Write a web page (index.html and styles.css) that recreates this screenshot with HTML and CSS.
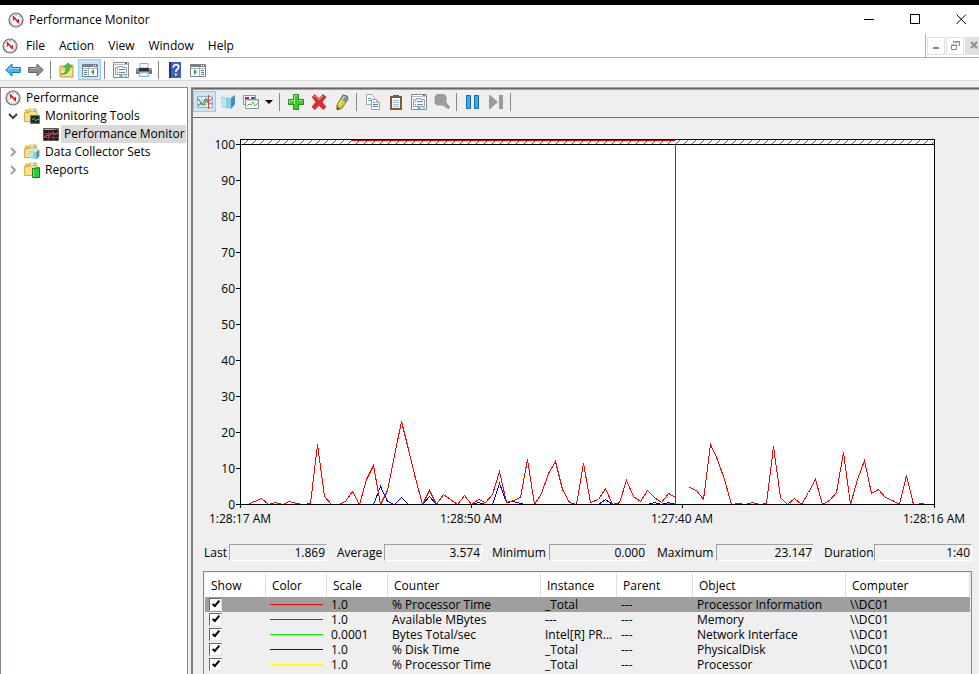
FILE: index.html
```html
<!DOCTYPE html>
<html lang="en">
<head>
  <meta charset="UTF-8">
  <meta name="viewport" content="width=device-width, initial-scale=1.0">
  <title>Performance Monitor</title>
  <link rel="stylesheet" href="styles.css">
</head>
<body>
  <!-- Shared icons -->
  <svg class="sprite" aria-hidden="true">
    <symbol id="i-logo" viewBox="0 0 16 16">
      <circle cx="8" cy="8" r="7" fill="#e4e4e4" stroke="#6e6e6e" stroke-width="1.2"/>
      <circle cx="8" cy="8" r="5.700" fill="#fff" stroke="#b0b0b0" stroke-width=".6"/>
      <path d="M5.500 8.500V5l5 5.500V7" fill="none" stroke="#e3101c" stroke-width="1.100"/>
      <path d="M5 4.500l5.500 6" fill="none" stroke="#e3101c" stroke-width="1.600"/>
      <path d="M3.500 9.500l1-1M11.500 5l1-1M8 3v1" stroke="#777" stroke-width=".8"/>
    </symbol>
    <symbol id="i-folder" viewBox="0 0 16 16">
      <path d="M1 1.500h4l1-1h6l1 1v12H1z" fill="#e8bf55"/>
      <path d="M7 1.500h5v2H7z" fill="#fff"/>
      <path d="M9 1.500h3v1H9z" fill="#49a5dd"/>
      <path d="M.5 4.500h5l1-1h6.500v10H.5z" fill="#f9df8c" stroke="#dcae43"/>
    </symbol>
    <symbol id="i-props" viewBox="0 0 16 16">
      <path d="M.5.500h15v15H.5z" fill="#fff" stroke="#8a8a8a"/>
      <path d="M1 2.500h14" stroke="#b5bcc5"/>
      <path d="M12 1.500h2" stroke="#555"/>
      <path d="M2.500 5.500h3v-1h4v1h4v7h-11z" fill="#f3f6fa" stroke="#95a0ad"/>
      <path d="M4 7.500h1M4 10.500h1" stroke="#28a8c8"/>
      <path d="M6 7.500h6M6 10.500h6" stroke="#7d8793"/>
      <path d="M6.500 14h3" stroke="#36c5ef" stroke-width="2"/>
      <path d="M11 14h3" stroke="#b8d8e8" stroke-width="2"/>
    </symbol>
    <symbol id="i-cube" viewBox="0 0 16 16">
      <path d="M1 3l5-2h9v9l-4 5-9-2z" fill="#8fcbe2"/>
      <path d="M1 3l5-2h9l-4 3z" fill="#dcf1f8"/>
      <path d="M11 4l4-3v9l-4 5z" fill="#3f91b8"/>
      <path d="M2 4l4 .5V13l-4-1z" fill="#bfe5f2"/>
    </symbol>
  </svg>

  <header class="title-bar">
    <svg class="icon"><use href="#i-logo"/></svg>
    <h1>Performance Monitor</h1>
    <div class="window-controls">
      <button aria-label="Minimize"><svg width="11" height="11"><path d="M0 5.500h10"/></svg></button>
      <button aria-label="Maximize"><svg width="11" height="11"><path d="M.5.500h9v9h-9z"/></svg></button>
      <button aria-label="Close"><svg class="smooth" width="11" height="11"><path d="M.5.500l9.500 9.500M10 .5L.5 10"/></svg></button>
    </div>
  </header>

  <nav class="menu-bar">
    <svg class="icon"><use href="#i-logo"/></svg>
    <button>File</button>
    <button>Action</button>
    <button>View</button>
    <button>Window</button>
    <button>Help</button>
    <div class="child-controls">
      <button aria-label="Minimize child"><svg width="11" height="11"><path d="M2 8h6" stroke="#7b8b9b" stroke-width="2"/></svg></button>
      <button aria-label="Restore child"><svg width="11" height="11" fill="none" stroke="#7b8b9b"><path d="M3.500 3V1.500h6v4H8M3 2h7M1.500 5.500h5v4h-5zM1 5h6"/></svg></button>
      <button class="disabled" aria-label="Close child"><svg width="11" height="11"><path d="M2 2l6 6M8 2L2 8" stroke="#8493a1" stroke-width="2"/></svg></button>
    </div>
  </nav>

  <div class="toolbar main-toolbar">
    <button aria-label="Back"><svg class="icon" viewBox="0 0 16 16"><path d="M.7 8L7 2v3.500h8.300v5H7V14z" fill="#42b4f0" stroke="#1674b8"/><path d="M3 8l3-3v1.500h8" fill="none" stroke="#9bddfb"/></svg></button>
    <button aria-label="Forward"><svg class="icon" viewBox="0 0 16 16"><path d="M15.300 8L9 2v3.500H.7v5H9V14z" fill="#8c8c8c" stroke="#666"/><path d="M2 6.500h8V5" fill="none" stroke="#b5b5b5"/></svg></button>
    <span class="separator"></span>
    <button aria-label="Up one level"><svg class="icon" viewBox="0 0 16 16"><path d="M1 4h4l1 1h5V3h3v12H1z" fill="#f2d27c" stroke="#c79a3e"/><path d="M2 8h11v6H2z" fill="#f8df9c"/><path d="M2 12c4 0 5-2 5-7H4.500L9 1l4 4h-2.500c0 5-3 8-8.500 7z" fill="#4cc13c" stroke="#319326" stroke-width=".6"/></svg></button>
    <button class="active" aria-label="Show or hide console tree"><svg class="icon" viewBox="0 0 16 16"><path d="M.5 2.500h15v12H.5z" fill="#fff" stroke="#79828c"/><path d="M0 4h16" stroke="#79828c" stroke-width="2"/><path d="M11 3.500h1M13 3.500h1" stroke="#fff"/><path d="M6.500 5v9M1 6.500h14" stroke="#aab1b8"/><path d="M2 8.500h3M2 10.500h3M2 12.500h3" stroke="#4c87ad"/><path d="M12 7v6l-3-3z" fill="#32a632"/></svg></button>
    <span class="separator"></span>
    <button aria-label="Properties"><svg class="icon"><use href="#i-props"/></svg></button>
    <button aria-label="Print"><svg class="icon" viewBox="0 0 16 16"><path d="M4 1.500h8V6H4z" fill="#f9f9f9" stroke="#aaa"/><path d="M0 6h16v6H0z" fill="#74787c"/><path d="M0 6h16v2H0z" fill="#9ca0a4"/><path d="M3 6h10v3H3z" fill="#303234"/><path d="M3.500 10.500h9v4h-9z" fill="#e7f5fc" stroke="#84b9d4"/><path d="M1 9.500h1" stroke="#69e06a"/></svg></button>
    <span class="separator"></span>
    <button aria-label="Help"><svg class="icon" viewBox="0 0 16 16"><path d="M2 0h12v16H2z" fill="#3d5fc0"/><path d="M2 0h2v16H2z" fill="#18367e"/><path d="M6.300 5.500c0-4 5.300-3.500 5.300-.5 0 2.300-2.800 2.200-2.800 5M8.800 11.500v2" fill="none" stroke="#fff" stroke-width="1.800"/></svg></button>
    <button aria-label="Show or hide action pane"><svg class="icon" viewBox="0 0 16 16"><path d="M.5 2.500h15v12H.5z" fill="#fff" stroke="#79828c"/><path d="M0 4h16" stroke="#79828c" stroke-width="2"/><path d="M11 3.500h1M13 3.500h1" stroke="#fff"/><path d="M9.500 5v9M1 6.500h14" stroke="#aab1b8"/><path d="M11 8.500h3M11 10.500h3M11 12.500h3" stroke="#4c87ad"/><path d="M4 7v6l3-3z" fill="#32a632"/></svg></button>
  </div>

  <main class="workspace">
    <aside class="tree">
      <div class="node"><svg class="icon"><use href="#i-logo"/></svg><span>Performance</span></div>
      <ul>
        <li>
          <div class="node">
            <svg class="chevron open" viewBox="0 0 10 10"><path d="M1 3l4 4 4-4"/></svg>
            <svg class="icon"><use href="#i-folder"/><path d="M6.500 7.500h9v8h-9z" fill="#1f2b25" stroke="#707870"/><path d="M8 12l2-2 2 3 1-1.500h2" fill="none" stroke="#39d149"/></svg>
            <span>Monitoring Tools</span>
          </div>
          <ul>
            <li>
              <div class="node selected">
                <svg class="icon" viewBox="0 0 16 16"><path d="M.5 2.500h15v12H.5z" fill="#211b1d" stroke="#555"/><path d="M1 3.500h14" stroke="#aaa"/><path d="M11 3.500h1M13 3.500h1" stroke="#333"/><path d="M1 7.500h14M1 11.500h14M5.500 5v9M10.500 5v9" stroke="#5a4a4d"/><path d="M1 11l3-2 2 1 3-3 3 1.500L15 7" fill="none" stroke="#e1343d" stroke-width="1.500"/></svg>
                <span>Performance Monitor</span>
              </div>
            </li>
          </ul>
        </li>
        <li>
          <div class="node">
            <svg class="chevron" viewBox="0 0 10 10"><path d="M3 1l4 4-4 4"/></svg>
            <svg class="icon"><use href="#i-folder"/><use href="#i-cube" x="5" y="5" width="11" height="11"/></svg>
            <span>Data Collector Sets</span>
          </div>
        </li>
        <li>
          <div class="node">
            <svg class="chevron" viewBox="0 0 10 10"><path d="M3 1l4 4-4 4"/></svg>
            <svg class="icon"><use href="#i-folder"/><path d="M8.500 6.500l7-1v10h-7z" fill="#27cf32" stroke="#147a1c"/><path d="M9.500 7v8" stroke="#8cf08e"/></svg>
            <span>Reports</span>
          </div>
        </li>
      </ul>
    </aside>

    <section class="monitor">
      <div class="toolbar graph-toolbar">
        <button class="active" aria-label="View current activity"><svg class="icon" viewBox="0 0 16 16"><path d="M.5 2.500h15v11H.5z" fill="#e8f2f8" stroke="#9aaebd"/><path d="M1 6.500h14M1 10.500h14M4.500 3v10M8.500 3v10" stroke="#c5d3dd"/><path d="M1 4l4 7 3-6 3 4 4-5" fill="none" stroke="#4573a5"/><path d="M1 12l3-3 3 2 3-6 2 5 3-1" fill="none" stroke="#45b638" stroke-width="1.200"/><path d="M11.500 1v14" stroke="#d3464a"/></svg></button>
        <button aria-label="View log data"><svg class="icon"><use href="#i-cube"/></svg></button>
        <button aria-label="Change graph type"><svg class="icon" viewBox="0 0 16 16"><path d="M.5 1.500h12v9H.5z" fill="#fff" stroke="#8794af"/><path d="M2 3h4v3H2z" fill="#b3264e"/><path d="M8 3h4v2H8z" fill="#386cb5"/><path d="M2.500 5.500h13v9h-13z" fill="#fff" stroke="#8794af"/><path d="M3 6.500h12" stroke="#c3cde0"/><path d="M4 12l2-2 2 1 2-3 2 4 3-3" fill="none" stroke="#5fae38"/></svg></button>
        <button class="drop" aria-label="Graph types"><svg width="8" height="4"><path d="M0 0h8L4 4z"/></svg></button>
        <span class="separator"></span>
        <button aria-label="Add"><svg class="icon" viewBox="0 0 16 16"><path d="M5.500.500h5v5h5v5h-5v5h-5v-5h-5v-5h5z" fill="#3fcb25" stroke="#278718"/><path d="M6.500 10V1.500H9M1.500 9V6.500h5M11 6.500h3.500" fill="none" stroke="#a3ef8d"/></svg></button>
        <button aria-label="Delete"><svg class="icon" viewBox="0 0 16 16"><path d="M1 3l3-2.500L8 5l4-4.500L15 3l-4 5 4 5-3 2.500L8 11l-4 4.500L1 13l4-5z" fill="#df2e2e" stroke="#b51d1d" stroke-width=".7"/><path d="M2 3l2-1.500L8 6l4-4" fill="none" stroke="#ff9a91"/></svg></button>
        <button aria-label="Highlight"><svg class="icon" viewBox="0 0 16 16"><path d="M9 1l4 1 1 3-6 9-5 2V11z" fill="#e4cb2e" stroke="#75702f"/><path d="M9 1l4 1 1 3-2 3-5-3z" fill="#7c9daf" stroke="#5a6f7a" stroke-width=".6"/><path d="M10.500 2L5 11" stroke="#fff4a2"/><path d="M3 12v4l3-1z" fill="#555029"/></svg></button>
        <span class="separator"></span>
        <button aria-label="Copy properties"><svg class="icon" viewBox="0 0 16 16"><path d="M1.500.500h5l3 3v7h-8z" fill="#fff" stroke="#a4a4a4"/><path d="M3 4.500h3M3 6.500h4" stroke="#6a9bcd"/><path d="M6.500 5.500h5l3 3v7h-8z" fill="#fff" stroke="#a4a4a4"/><path d="M11.500 5.500v3h3" fill="none" stroke="#a4a4a4"/><path d="M8 8.500h2M8 10.500h5M8 12.500h5" stroke="#4585c4"/></svg></button>
        <button aria-label="Paste counter list"><svg class="icon" viewBox="0 0 16 16"><path d="M2 2h12v14H2z" fill="#8b572b"/><path d="M4 4h8v10H4z" fill="#fff"/><path d="M5 1h6v3H5z" fill="#5d666e"/><path d="M5 6.500h6M5 8.500h6M5 10.500h6M5 12.500h6" stroke="#9dbfd4"/></svg></button>
        <button aria-label="Properties"><svg class="icon"><use href="#i-props"/></svg></button>
        <button aria-label="Zoom"><svg class="icon" viewBox="0 0 16 16"><path d="M3 0h7l2.500 2.500v6L16 13l-1.500 2.500L9 11.500H3L.5 9V2.500z" fill="#9b9b9b"/></svg></button>
        <span class="separator"></span>
        <button aria-label="Freeze display"><svg class="icon" viewBox="0 0 16 16"><path d="M1.500 1.500h4v13h-4zM9.500 1.500h4v13h-4z" fill="#31b0ed" stroke="#1269b0"/></svg></button>
        <button aria-label="Update data"><svg class="icon" viewBox="0 0 16 16"><path d="M1 1h1l8 7-8 7H1zM11 1h4v14h-4z" fill="#9b9b9b"/></svg></button>
        <span class="separator"></span>
      </div>

      <div class="chart">
        <div class="y-axis">
          <span>100</span><span>90</span><span>80</span><span>70</span><span>60</span><span>50</span>
          <span>40</span><span>30</span><span>20</span><span>10</span><span>0</span>
        </div>
        <div class="plot">
          <svg class="clip-band" width="100%" height="5">
            <defs>
              <pattern id="hatch" width="8" height="5" patternUnits="userSpaceOnUse"><path d="M2 5l5-5" stroke="#555"/></pattern>
            </defs>
            <rect width="100%" height="5" fill="url(#hatch)"/>
          </svg>
          <svg class="clip-line" viewBox="0 0 694 2" preserveAspectRatio="none"><path d="M111 1h324" stroke="#e80000" stroke-width="2"/></svg>
          <svg class="series" viewBox="0.5 0.5 693 359" preserveAspectRatio="none">
            <path stroke="#00ff00" d="M421 359h14"/>
            <polyline stroke="#ffff00" points="266,358 273,353 280,353 287,316"/>
            <g stroke="#0000ff">
              <polyline points="133,360 140,342 147,357 154,360 161,353 168,360"/>
              <polyline points="182,360 189,352 196,360"/>
              <polyline points="231,360 238,358 245,360 252,360 259,339 266,358 273,357 280,359 284,360"/>
              <polyline points="358,360 365,355 372,360 379,359"/>
              <polyline points="407,360 414,358 421,360 428,358 435,360"/>
            </g>
            <g stroke="#ff0000">
              <polyline points="7,360 14,357 21,354 28,360 35,358 42,360 49,357 56,359 63,360 70,359 77,300 84,352 91,360 98,360 105,357 112,347 119,360 126,335 133,321 140,360 147,346 154,311 161,277 168,305 175,334 182,360 189,346 196,360 203,350 210,355 217,360 224,351 231,360 238,355 245,358 252,350 259,327 266,358 273,356 280,353 287,315 294,360 301,349 308,329 315,317 322,345 329,358 336,360 343,319 350,358 358,355 365,344 372,360 379,358 386,336 393,352 400,357 407,346 414,353 421,358 428,349 435,353"/>
              <polyline points="449,343 456,346 463,355 470,300 477,315 484,335 491,360 498,359 505,360 512,358 519,360 526,359 533,302 540,353 547,360 554,354 561,360 568,348 575,335 582,360 589,356 596,348 603,308 610,360 617,335 624,316 631,349 638,345 645,353 652,356 659,360 666,331 673,360 684,359"/>
              <path d="M435 0v360"/>
            </g>
          </svg>
        </div>
        <div class="x-axis">
          <span>1:28:17 AM</span><span>1:28:50 AM</span><span>1:27:40 AM</span><span>1:28:16 AM</span>
        </div>
      </div>

      <div class="stats">
        <label for="last">Last</label><input id="last" value="1.869" readonly>
        <label for="average">Average</label><input id="average" value="3.574" readonly>
        <label for="minimum">Minimum</label><input id="minimum" value="0.000" readonly>
        <label for="maximum">Maximum</label><input id="maximum" value="23.147" readonly>
        <label for="duration">Duration</label><input id="duration" value="1:40" readonly>
      </div>

      <div class="legend">
        <table>
          <colgroup>
            <col class="w-small"><col class="w-small"><col class="w-small"><col class="w-large">
            <col class="w-medium"><col class="w-medium"><col class="w-large"><col>
          </colgroup>
          <thead>
            <tr><th>Show</th><th>Color</th><th>Scale</th><th>Counter</th><th>Instance</th><th>Parent</th><th>Object</th><th>Computer</th></tr>
          </thead>
          <tbody>
            <tr class="selected"><td><input type="checkbox" aria-label="Show processor information" checked></td><td><i class="line red"></i></td><td>1.0</td><td>% Processor Time</td><td>_Total</td><td>---</td><td>Processor Information</td><td>\\DC01</td></tr>
            <tr><td><input type="checkbox" aria-label="Show memory" checked></td><td><i class="line red"></i></td><td>1.0</td><td>Available MBytes</td><td>---</td><td>---</td><td>Memory</td><td>\\DC01</td></tr>
            <tr><td><input type="checkbox" aria-label="Show network interface" checked></td><td><i class="line green"></i></td><td>0.0001</td><td>Bytes Total/sec</td><td>Intel[R] PR...</td><td>---</td><td>Network Interface</td><td>\\DC01</td></tr>
            <tr><td><input type="checkbox" aria-label="Show physical disk" checked></td><td><i class="line blue"></i></td><td>1.0</td><td>% Disk Time</td><td>_Total</td><td>---</td><td>PhysicalDisk</td><td>\\DC01</td></tr>
            <tr><td><input type="checkbox" aria-label="Show processor" checked></td><td><i class="line yellow"></i></td><td>1.0</td><td>% Processor Time</td><td>_Total</td><td>---</td><td>Processor</td><td>\\DC01</td></tr>
          </tbody>
        </table>
      </div>
    </section>
  </main>
</body>
</html>
```
FILE: styles.css
```css
*, *::before, *::after {
  box-sizing: border-box;
}

:root {
  --face: #efefef;
  --border: #828790;
  --active-bg: #cce4f7;
  --active-border: #99cdf5;
}

body {
  font-family: "Segoe UI", "Open Sans", sans-serif;
  font-size: 12px;
  line-height: 15px;
  color: #000;
  background: var(--face);
  margin: 0;
  height: 100vh;
  overflow: hidden;
  display: flex;
  flex-direction: column;
}

svg {
  display: block;
  flex: none;
}

.sprite {
  position: absolute;
  width: 0;
  height: 0;
}

.icon {
  width: 16px;
  height: 16px;
}

button {
  font: inherit;
  color: inherit;
  background: transparent;
  border: 0;
  padding: 0;
}

/* Title bar */
.title-bar {
  display: flex;
  align-items: center;
  height: 34px;
  flex: none;
  padding-left: 8px;
  border-top: 5px solid #000;
  background: #fff;
}

.title-bar h1 {
  font-size: 12px;
  font-weight: 400;
  margin: 0 0 0 5px;
}

.window-controls {
  display: flex;
  margin-left: auto;
  margin-right: -5px;
}

.window-controls button {
  width: 46px;
  height: 29px;
  display: grid;
  place-items: center;
}

.window-controls path {
  fill: none;
  stroke: #000;
  shape-rendering: crispEdges;
}

.window-controls .smooth path {
  shape-rendering: auto;
}

/* Menu bar */
.menu-bar {
  display: flex;
  align-items: center;
  height: 24px;
  flex: none;
  padding-left: 2px;
  background: #fff;
  border-bottom: 1px solid #acafb5;
}

.menu-bar > button {
  padding: 0 7px;
}

.menu-bar .icon {
  margin-right: 1px;
}

.child-controls {
  display: flex;
  align-items: center;
  gap: 1px;
  align-self: stretch;
  margin-left: auto;
  margin-right: -4px;
  padding-left: 1px;
  border-left: 1px solid #acafb5;
}

.child-controls button {
  width: 18px;
  height: 18px;
  display: grid;
  place-items: center;
  border: 1px solid #e0e0e0;
}

.child-controls .disabled {
  background: #e0e0e0;
}

/* Toolbars */
.toolbar {
  display: flex;
  align-items: center;
  flex: none;
}

.toolbar button {
  width: 23px;
  height: 21px;
  display: grid;
  place-items: center;
}

.toolbar .active {
  background: var(--active-bg);
  border: 1px solid var(--active-border);
}

.toolbar .drop {
  width: 14px;
}

.separator {
  width: 8px;
  height: 18px;
  background: linear-gradient(#85878a, #85878a) 3px 0 / 1px 100% no-repeat;
}

.main-toolbar {
  height: 23px;
  padding: 1px 0 0 1px;
  background: #fff;
  border-bottom: 1px solid #dadada;
}

.graph-toolbar {
  height: 30px;
  padding-bottom: 2px;
  border-bottom: 1px solid #6b6b6b;
}

/* Tree and main pane */
.workspace {
  display: flex;
  gap: 3px;
  flex: 1;
  min-height: 0;
  padding-top: 6px;
}

.tree {
  width: 188px;
  flex: none;
  overflow: hidden;
  padding-top: 1px;
  background: #fff;
  border: 1px solid var(--border);
  border-bottom: 0;
}

.tree > .node {
  padding-left: 4px;
}

.tree ul {
  list-style: none;
  margin: 0;
  padding: 0 0 0 7px;
}

.tree ul ul {
  padding-left: 35px;
}

.node {
  display: flex;
  align-items: center;
  height: 18px;
}

.node span {
  padding: 1px 1px 2px 3px;
  margin-left: 2px;
  white-space: nowrap;
}

.node.selected span {
  background: #d9d9d9;
}

.chevron {
  width: 10px;
  height: 10px;
  margin-right: 6px;
  fill: none;
  stroke: #a0a0a0;
  stroke-width: 2;
}

.chevron.open {
  stroke: #404040;
}

.monitor {
  flex: 1;
  min-width: 0;
  display: flex;
  flex-direction: column;
  border-top: 1px solid #a0a0a0;
  border-left: 2px solid #808080;
  box-shadow: inset 0 1px #696969, inset 0 2px #a0a0a0;
}

/* Graph */
.chart {
  display: grid;
  grid-template-columns: 47px 1fr;
  grid-template-rows: 366px auto;
  padding: 21px 44px 0 0;
}

.y-axis {
  display: flex;
  flex-direction: column;
  justify-content: space-between;
  margin: -2px 0 -7px;
}

.y-axis span {
  display: flex;
  align-items: center;
  justify-content: flex-end;
  gap: 1px;
}

.y-axis span::after {
  content: "";
  width: 4px;
  height: 1px;
  background: #000;
}

.plot {
  position: relative;
  display: flex;
  flex-direction: column;
  background: #fff;
  border: 1px solid #000;
}

.clip-band {
  border-bottom: 1px solid #000;
}

.clip-line {
  position: absolute;
  top: 0;
  left: 0;
  width: 100%;
  height: 1px;
}

.series {
  width: 100%;
  flex: 1;
  min-height: 0;
  fill: none;
  shape-rendering: crispEdges;
}

.x-axis {
  grid-column: 2;
  display: grid;
  grid-template-columns: 231fr 211fr 252fr 1px;
}

.x-axis span {
  justify-self: start;
  display: flex;
  flex-direction: column;
  align-items: center;
  gap: 3px;
  white-space: nowrap;
  transform: translateX(-50%);
}

.x-axis span::before {
  content: "";
  width: 1px;
  height: 3px;
  background: #000;
}

/* Values under the graph */
.stats {
  display: grid;
  grid-template-columns: 25px 1fr 57px 1fr 67px 1fr 69px 1fr 60px 1fr;
  align-items: center;
  padding: 18px 7px 0 11px;
}

.stats label + input ~ label {
  padding-left: 10px;
}

.stats input {
  width: 100%;
  height: 17px;
  padding: 0 1px;
  font: inherit;
  text-align: right;
  background: var(--face);
  border: 1px solid;
  border-color: #a0a0a0 #fff #fff #a0a0a0;
  border-radius: 0;
}

/* Counter list */
.legend {
  flex: 1;
  min-height: 0;
  overflow: hidden;
  margin: 10px 7px 0 10px;
  padding: 1px 1px 0;
  border: 1px solid var(--border);
  border-bottom: 0;
}

.legend table {
  width: 100%;
  table-layout: fixed;
  border-collapse: separate;
  border-spacing: 0;
}

.w-small {
  width: 61px;
}

.w-medium {
  width: 76px;
}

.w-large {
  width: 153px;
}

.legend th {
  height: 24px;
  padding: 0 6px;
  font-weight: 400;
  text-align: left;
  background: #fff;
  border-right: 1px solid #e0e0e0;
}

.legend td {
  height: 15px;
  padding: 0 4px;
  line-height: 15px;
  white-space: nowrap;
}

.legend .selected td {
  background: #9f9f9f;
}

.legend input {
  appearance: none;
  display: block;
  width: 13px;
  height: 13px;
  margin: 0;
  background: #fff;
  border: 1px solid;
  border-color: #696969 #e3e3e3 #e3e3e3 #696969;
}

.legend input:checked::before {
  content: "";
  display: block;
  width: 4px;
  height: 8px;
  margin: 0 0 0 4px;
  border: solid #000;
  border-width: 0 2px 2px 0;
  transform: rotate(40deg);
}

.line {
  display: block;
  width: 53px;
  height: 1px;
}

.red {
  background: #ff0000;
}

.green {
  background: #00ff00;
}

.blue {
  background: #0000ff;
}

.yellow {
  background: #ffff00;
}
```
